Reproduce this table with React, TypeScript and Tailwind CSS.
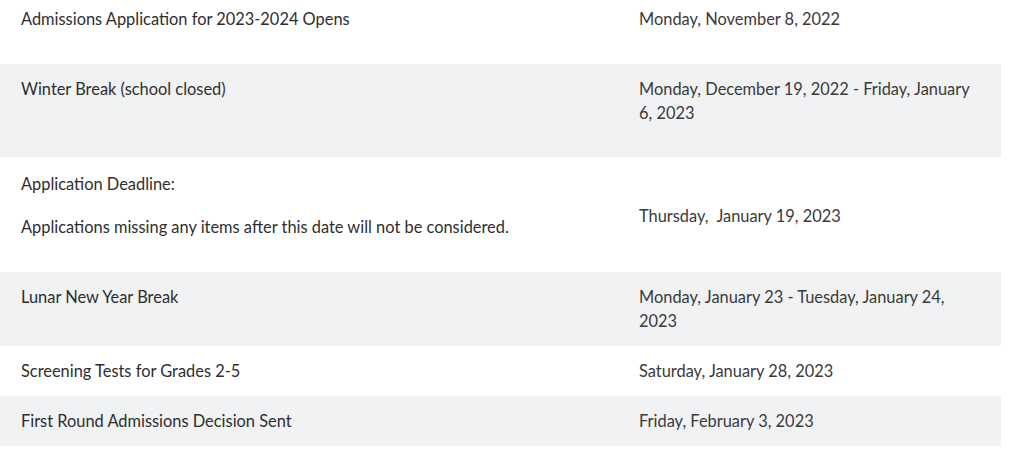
const rows = [
  {
    title: "Admissions Application for 2023-2024 Opens",
    date: ["Monday, November 8, 2022"],
    gray: false,
    cls: "pt-[7px] pb-[33px]",
  },
  {
    title: "Winter Break (school closed)",
    date: ["Monday, December 19, 2022 - Friday, January", "6, 2023"],
    gray: true,
    cls: "pt-[13px] pb-[32px]",
  },
  {
    title: "Lunar New Year Break",
    date: ["Monday, January 23 - Tuesday, January 24,", "2023"],
    gray: true,
    cls: "pt-[13px] pb-[13px]",
  },
  {
    title: "Screening Tests for Grades 2-5",
    date: ["Saturday, January 28, 2023"],
    gray: false,
    cls: "pt-[13px] pb-[13px]",
  },
  {
    title: "First Round Admissions Decision Sent",
    date: ["Friday, February 3, 2023"],
    gray: true,
    cls: "pt-[13px] pb-[13px]",
  },
];

function Row({ row }: { row: (typeof rows)[number] }) {
  return (
    <div className={`grid grid-cols-[639px_1fr] ${row.gray ? "bg-[#f1f2f4]" : "bg-white"} ${row.cls}`}>
      <div className="pl-[21px] text-[#2e2e2e]">{row.title}</div>
      <div className="pr-[21px] text-[#3a3a3a]">
        {row.date.map((d, i) => (
          <div key={i}>{d}</div>
        ))}
      </div>
    </div>
  );
}

export default function App() {
  return (
    <div className="h-[454px] w-[1012px] bg-white">
      <div
        className="w-[1001px] text-[16.4px] leading-[24px]"
        style={{ fontFamily: "Lato, 'Open Sans', sans-serif" }}
      >
        <Row row={rows[0]} />
        <Row row={rows[1]} />
        <div className="grid grid-cols-[639px_1fr] items-center bg-white pt-[15px] pb-[13px]">
          <div className="pl-[21px] text-[#2e2e2e]">
            <p className="mb-[19px]">Application Deadline:</p>
            <p className="mb-[20px]">Applications missing any items after this date will not be considered.</p>
          </div>
          <div className="pr-[21px] text-[#3a3a3a]">Thursday,&nbsp; January 19, 2023</div>
        </div>
        <Row row={rows[2]} />
        <Row row={rows[3]} />
        <Row row={rows[4]} />
      </div>
    </div>
  );
}
